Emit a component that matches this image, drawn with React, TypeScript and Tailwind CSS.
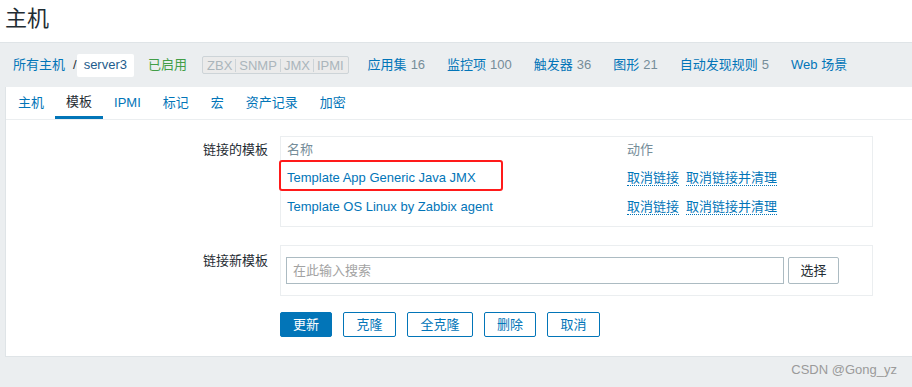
import React from "react";

const font = "font-['Liberation_Sans','Noto_Sans_CJK_SC',sans-serif]";

const tabs = ["主机", "模板", "IPMI", "标记", "宏", "资产记录", "加密"];

const navLinks: { label: string; count?: string }[] = [
  { label: "应用集", count: "16" },
  { label: "监控项", count: "100" },
  { label: "触发器", count: "36" },
  { label: "图形", count: "21" },
  { label: "自动发现规则", count: "5" },
  { label: "Web 场景" },
];

const linked = ["Template App Generic Java JMX", "Template OS Linux by Zabbix agent"];

const formButtons = [
  { label: "更新", width: "w-[52px]", primary: true },
  { label: "克隆", width: "w-[53px]" },
  { label: "全克隆", width: "w-[66px]" },
  { label: "删除", width: "w-[52px]" },
  { label: "取消", width: "w-[53px]" },
];

function ActionLink({ children }: { children: React.ReactNode }) {
  return (
    <span className="border-b border-dotted border-[#0275b8] leading-[15px] text-[#0275b8]">
      {children}
    </span>
  );
}

export default function App() {
  return (
    <div className={`relative h-[387px] w-[912px] overflow-hidden bg-[#ebeef0] text-[13px] text-[#1f2c33] ${font}`}>
      <header className="flex h-[43px] items-center border-b border-[#dfe4e7] bg-white pl-[5px]">
        <h1 className="pb-[5px] text-[22px] leading-none">主机</h1>
      </header>

      <nav className="flex h-[44px] items-center pl-[13px]">
        <span className="text-[#0275b8]">所有主机</span>
        <span className="ml-[8px] text-[#1f2c33]">/</span>
        <span className="flex h-[23px] items-center rounded-[2px] bg-white px-[7px] text-[#1d5c8c]">
          server3
        </span>
        <span className="ml-[14px] text-[#429e47]">已启用</span>
        <span className="ml-[15px] flex h-[18px] items-center rounded-[2px] border border-[#cdd4d8] bg-[#ebebeb] px-[1px] text-[13px] leading-none text-[#aab5bb]">
          <span className="px-[3px]">ZBX</span>
          <span className="border-l border-[#cdd4d8] px-[3px]">SNMP</span>
          <span className="border-l border-[#cdd4d8] px-[3px]">JMX</span>
          <span className="border-l border-[#cdd4d8] px-[3px]">IPMI</span>
        </span>
        <div className="ml-[19px] flex gap-[22px]">
          {navLinks.map((n) => (
            <span key={n.label} className="text-[#0275b8]">
              {n.label}
              {n.count ? <span className="ml-[4px] text-[#768d99]">{n.count}</span> : null}
            </span>
          ))}
        </div>
      </nav>

      <section className="ml-[5px] h-[270px] border-b border-l border-[#dfe4e7] bg-white">
        <div className="flex h-[33px] border-b border-[#ebeef0] pl-[1px]">
          {tabs.map((t) => (
            <span
              key={t}
              className={`flex h-full items-center px-[11px] pb-[1px] ${
                t === "模板"
                  ? "border-b-[3px] border-[#0275b8] pt-[2px] text-[#1f2c33]"
                  : "text-[#0275b8]"
              }`}
            >
              {t}
            </span>
          ))}
        </div>

        <div className="grid grid-cols-[262px_593px] gap-x-[12px] pt-[16px]">
          <label className="pt-[4px] text-right">链接的模板</label>
          <div className="border border-[#ebeef0] pb-[5px] pl-[6px]">
            <div className="grid h-[26px] grid-cols-[340px_1fr] items-center text-[#768d99]">
              <span>名称</span>
              <span>动作</span>
            </div>
            {linked.map((name, i) => (
              <div key={name} className="grid h-[29px] grid-cols-[340px_1fr] items-center">
                <span className="relative text-[#0275b8]">
                  {name}
                  {i === 0 ? (
                    <span className="absolute left-[-8px] top-[-8px] h-[31px] w-[224px] rounded-[3px] border-[2px] border-[#ff1a1a]" />
                  ) : null}
                </span>
                <span className="flex gap-[7px]">
                  <ActionLink>取消链接</ActionLink>
                  <ActionLink>取消链接并清理</ActionLink>
                </span>
              </div>
            ))}
          </div>

          <label className="mt-[18px] pt-[6px] text-right">链接新模板</label>
          <div className="mt-[18px] flex h-[51px] items-center gap-[4px] border border-[#ebeef0] pl-[5px]">
            <div className="flex h-[27px] w-[498px] items-center border border-[#acbbc2] pl-[6px] text-[#a3a3a3]">
              在此输入搜索
            </div>
            <button
              type="button"
              className="flex h-[27px] w-[51px] items-center justify-center rounded-[2px] border border-[#acbbc2] bg-white text-[#1f2c33]"
            >
              选择
            </button>
          </div>

          <div />
          <div className="mt-[16px] flex gap-[11px]">
            {formButtons.map((b) => (
              <button
                key={b.label}
                type="button"
                className={`flex h-[25px] items-center justify-center rounded-[2px] border border-[#0275b8] text-[13px] ${b.width} ${
                  b.primary ? "bg-[#0275b8] text-white" : "bg-white text-[#0275b8]"
                }`}
              >
                {b.label}
              </button>
            ))}
          </div>
        </div>
      </section>

      <span className="absolute bottom-[8px] right-[15px] text-[13px] text-[#9a9a9a]">CSDN @Gong_yz</span>
    </div>
  );
}
